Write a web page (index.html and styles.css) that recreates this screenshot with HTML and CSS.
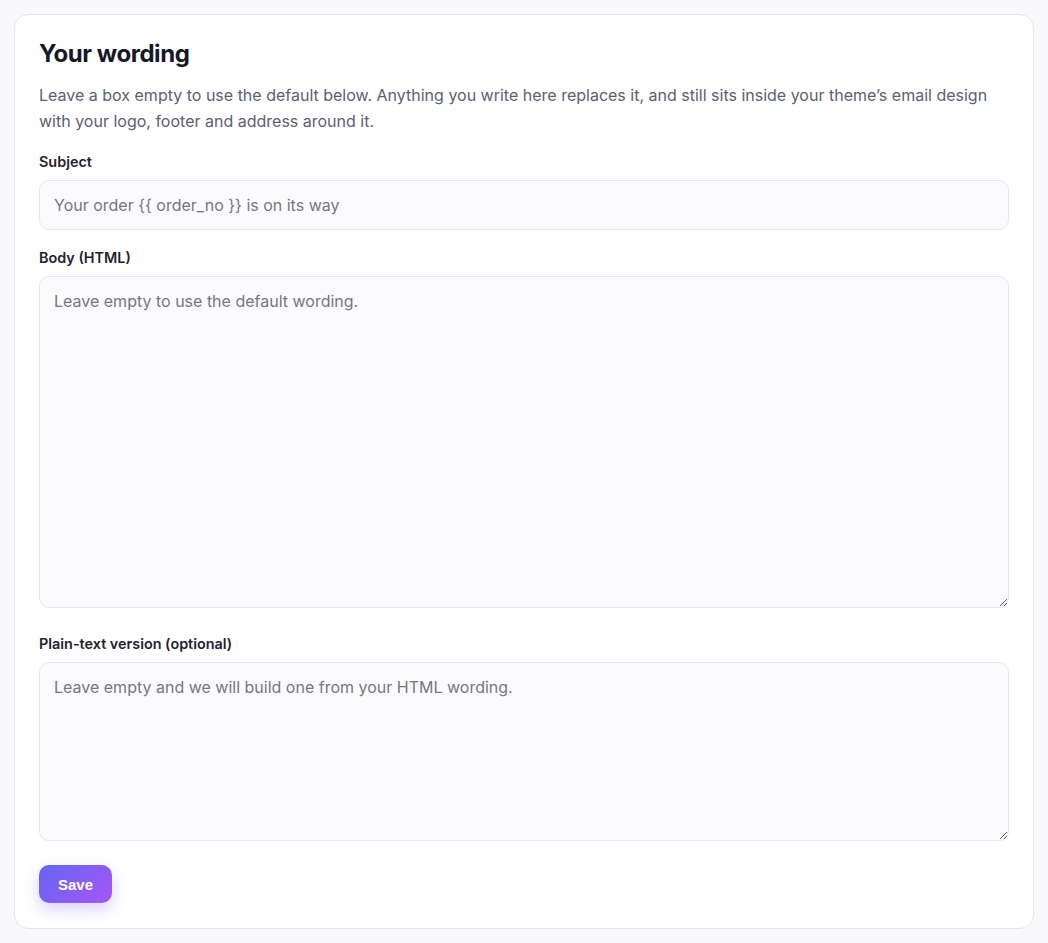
FILE: index.html
```html
<!DOCTYPE html>
<html lang="en">
<head>
    <meta charset="UTF-8">
    <meta name="viewport" content="width=device-width, initial-scale=1.0">
    <title>Your wording</title>
    <link rel="stylesheet" href="styles.css">
</head>
<body>
    <div class="card">
        <h1>Your wording</h1>
        <p class="intro">Leave a box empty to use the default below. Anything you write here replaces it, and still sits inside your theme’s email design with your logo, footer and address around it.</p>
        <form id="wordingForm">
            <div class="form-group">
                <label for="subject">Subject</label>
                <input type="text" id="subject" name="subject" placeholder="Your order {{ order_no }} is on its way">
            </div>
            <div class="form-group form-group-wide">
                <label for="body">Body (HTML)</label>
                <textarea id="body" name="body" class="tall" placeholder="Leave empty to use the default wording."></textarea>
            </div>
            <div class="form-group form-group-last">
                <label for="plain">Plain-text version (optional)</label>
                <textarea id="plain" name="plain" class="short" placeholder="Leave empty and we will build one from your HTML wording."></textarea>
            </div>
            <button type="submit" class="btn">Save</button>
        </form>
    </div>
</body>
</html>
```

FILE: styles.css
```css
body {
    font-family: Inter, "Noto Sans", sans-serif;
    margin: 0;
    padding: 14px;
    background: #f9f9fc;
}
.card {
    background: white;
    border: 1px solid #e6e6ee;
    border-radius: 14px;
    padding: 24px 24px 25px;
}
h1 {
    color: #161827;
    font-size: 24px;
    font-weight: 700;
    line-height: 30px;
    margin: 0 0 13px;
    letter-spacing: -0.45px;
}
.intro {
    color: #5b6074;
    font-size: 16px;
    line-height: 26px;
    margin: 0 0 18px;
}
.form-group {
    margin-bottom: 18px;
}
.form-group-wide {
    margin-bottom: 26px;
}
.form-group-last {
    margin-bottom: 24px;
}
label {
    display: block;
    margin-bottom: 8px;
    color: #1f2230;
    font-size: 0.9rem;
    line-height: 20px;
    font-weight: 600;
}
input,
textarea {
    display: block;
    width: 100%;
    box-sizing: border-box;
    padding: 12px 14px;
    border: 1px solid #e6e6ef;
    border-radius: 10px;
    background: #fbfbfe;
    font-family: Inter, "Noto Sans", sans-serif;
    font-size: 16px;
    line-height: 24px;
    color: #1f2230;
    margin: 0;
}
input::placeholder,
textarea::placeholder {
    color: #77777c;
}
input:focus,
textarea:focus {
    outline: none;
    border-color: #8b5cf6;
}
.tall {
    height: 332px;
}
.short {
    height: 179px;
}
.btn {
    display: block;
    height: 38px;
    padding: 0 19px;
    border: none;
    border-radius: 10px;
    background: linear-gradient(135deg, #6366f1 0%, #a855f7 100%);
    color: white;
    font-family: "Liberation Sans", Arial, sans-serif;
    font-size: 15px;
    font-weight: 700;
    box-shadow: 0 6px 16px rgba(110, 90, 245, 0.28);
    cursor: pointer;
}
```
